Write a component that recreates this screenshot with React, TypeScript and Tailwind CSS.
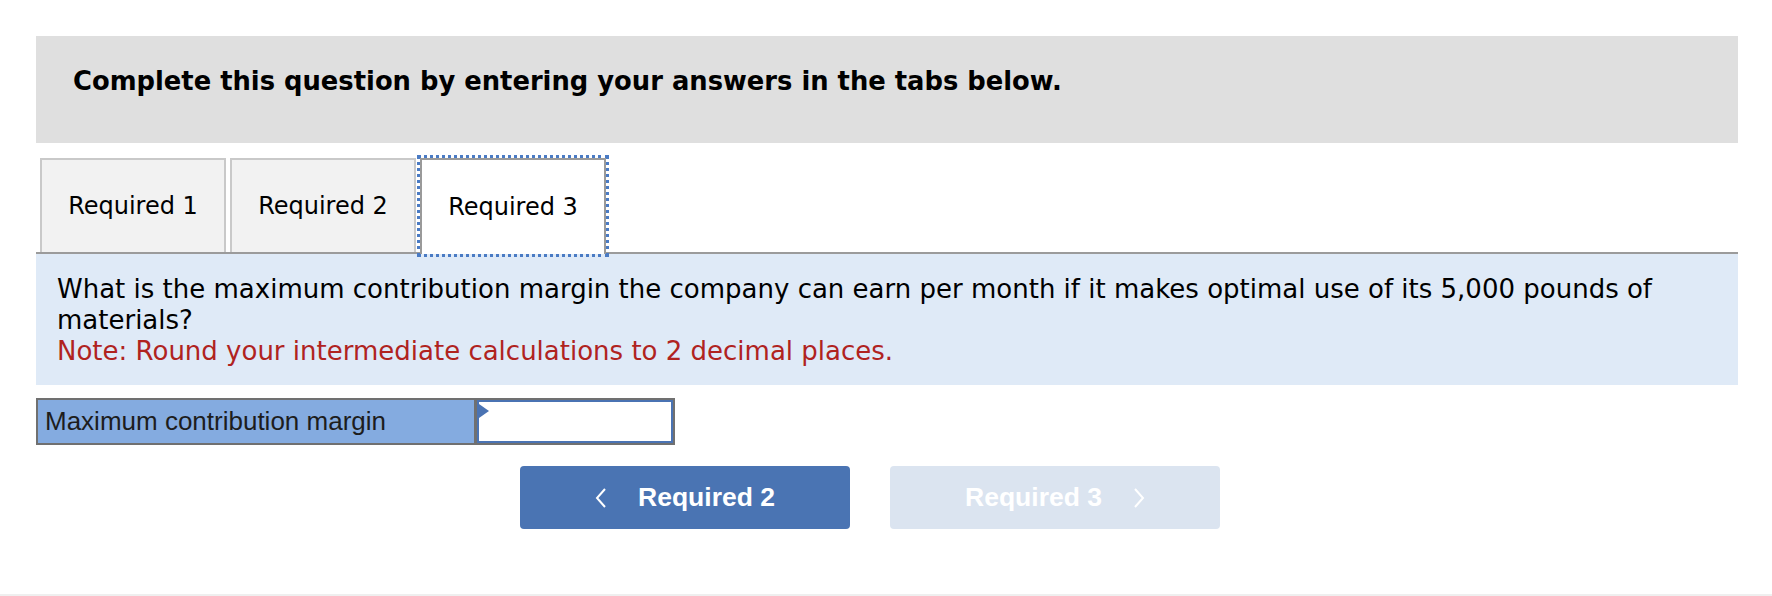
import React from 'react';

const tabs = ['Required 1', 'Required 2', 'Required 3'];

function Chevron({ dir }: { dir: 'left' | 'right' }) {
  return (
    <svg width="12" height="22" viewBox="0 0 12 22" fill="none" className="shrink-0">
      <polyline
        points={dir === 'left' ? '10,2 2,11 10,20' : '2,2 10,11 2,20'}
        stroke="currentColor"
        strokeWidth="2"
        strokeLinejoin="miter"
      />
    </svg>
  );
}

export default function App() {
  const active = 2;

  return (
    <div className="flex h-[596px] w-[1772px] flex-col bg-white">
      <div className="flex flex-1 flex-col pl-[36px] pr-[34px] pt-[36px]">
        {/* instructions header */}
        <div className="h-[107px] bg-[#dfdfdf] pl-[37px] pt-[30px]">
          <p className="font-['DejaVu_Sans',sans-serif] text-[25.8px] font-bold leading-[30px] text-black">
            Complete this question by entering your answers in the tabs below.
          </p>
        </div>

        {/* tabs */}
        <div className="mt-[15px] flex gap-[4px] border-b-2 border-[#9b9b9b] pl-[4px]">
          {tabs.map((t, i) => (
            <div
              key={t}
              className={
                i === active
                  ? "relative z-10 -mb-[2px] flex h-[96px] w-[186px] items-center justify-center border-2 border-b-0 border-[#9a9a9a] bg-white outline-[3px] outline-dotted outline-[#4a7bc4] font-['DejaVu_Sans',sans-serif] text-[24px] text-black"
                  : "flex h-[94px] w-[186px] items-center justify-center border-2 border-b-0 border-[#c9c9c9] bg-[#f2f2f2] font-['DejaVu_Sans',sans-serif] text-[24px] text-black"
              }
            >
              {t}
            </div>
          ))}
        </div>

        {/* question panel */}
        <div className="bg-[#dfeaf7] pb-[18px] pl-[21px] pr-[21px] pt-[20px] font-['DejaVu_Sans',sans-serif] text-[26px] leading-[31px]">
          <p className="text-black">
            What is the maximum contribution margin the company can earn per month if it makes optimal use of its 5,000 pounds of materials?
          </p>
          <p className="text-[#b0231f]">Note: Round your intermediate calculations to 2 decimal places.</p>
        </div>

        {/* answer row */}
        <div className="mt-[13px] flex h-[47px] w-[639px] border-2 border-[#707070] bg-[#707070] font-['Liberation_Sans',Arial,sans-serif]">
          <div className="flex w-[436px] items-center bg-[#84abe0] pl-[7px] text-[26px] text-[#1d1d1d]">
            Maximum contribution margin
          </div>
          <div className="relative ml-[3px] flex-1 border-2 border-[#4a73b3] bg-white">
            <svg width="10" height="14" viewBox="0 0 10 14" className="absolute left-0 top-[2px]">
              <polygon points="0,0 10,7 0,14" fill="#4a73b3" />
            </svg>
          </div>
        </div>

        {/* navigation buttons */}
        <div className="ml-[484px] mt-[21px] flex gap-[40px] font-['Liberation_Sans',Arial,sans-serif] text-[26.5px] font-bold text-white">
          <button className="flex h-[63px] w-[330px] items-center justify-center gap-[31px] rounded-[4px] bg-[#4a74b3]">
            <Chevron dir="left" />
            <span>Required 2</span>
          </button>
          <button className="flex h-[63px] w-[330px] items-center justify-center gap-[31px] rounded-[4px] bg-[#dbe4f0]">
            <span>Required 3</span>
            <Chevron dir="right" />
          </button>
        </div>
      </div>
      <div className="h-[2px] w-full bg-[#efefef]" />
    </div>
  );
}
